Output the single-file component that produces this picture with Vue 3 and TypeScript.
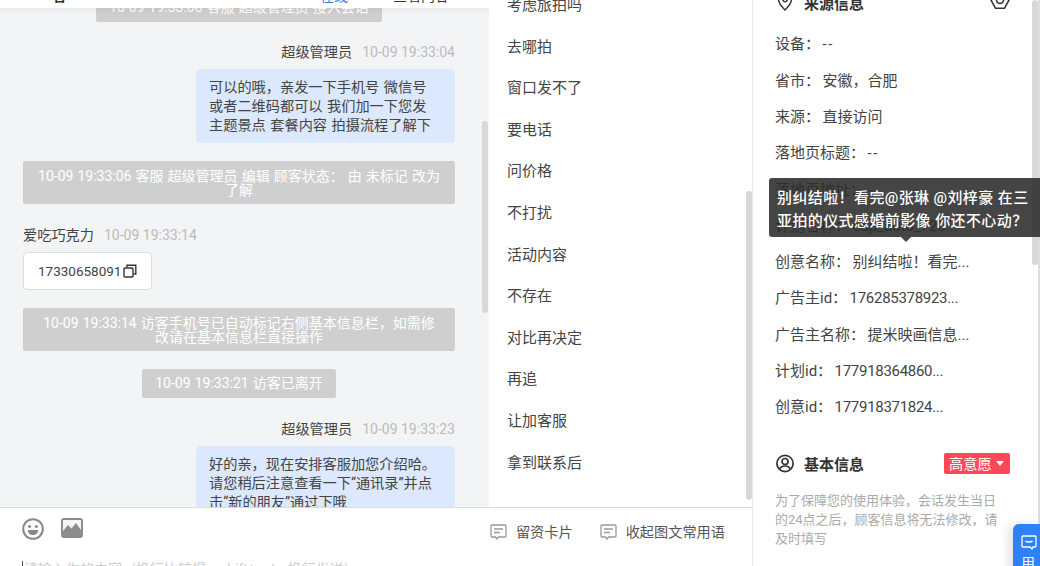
<script setup lang="ts">
interface InfoRow { label: string; value: string; kind?: 'dash' | 'num' }
const quickReplies: string[] = ['考虑旅拍吗','去哪拍','窗口发不了','要电话','问价格','不打扰','活动内容','不存在','对比再决定','再追','让加客服','拿到联系后']
const sourceInfo: InfoRow[] = [
  { label: '设备：', value: '--', kind: 'dash' },
  { label: '省市：', value: '安徽，合肥' },
  { label: '来源：', value: '直接访问' },
  { label: '落地页标题：', value: '--', kind: 'dash' },
  { label: '落地页地址：', value: '--', kind: 'dash' },
  { label: '计划名称：', value: 'cdp_auto_720...' },
  { label: '创意名称：', value: '别纠结啦！看完...' },
  { label: '广告主id：', value: '176285378923...', kind: 'num' },
  { label: '广告主名称：', value: '提米映画信息...' },
  { label: '计划id：', value: '177918364860...', kind: 'num' },
  { label: '创意id：', value: '177918371824...', kind: 'num' },
]
</script>

<template>
  <div class="page">
    <div class="main">
      <div class="top">
        <section class="chat">
          <header class="chat-head">
            <span class="h-name">名</span>
            <span class="h-link">在线</span>
            <span class="h-more">查看内容</span>
          </header>
          <div class="log">
            <div class="notice inline">10-09 19:33:00 客服 超级管理员 接入会话</div>
            <div class="who right first"><span>超级管理员</span><em>10-09 19:33:04</em></div>
            <div class="bubble">可以的哦，亲发一下手机号 微信号<br>或者二维码都可以 我们加一下您发<br>主题景点 套餐内容 拍摄流程了解下</div>
            <div class="notice">10-09 19:33:06 客服 超级管理员 编辑 顾客状态： 由 未标记 改为<br>了解</div>
            <div class="who"><span>爱吃巧克力</span><em>10-09 19:33:14</em></div>
            <div class="phone">
              17330658091
              <svg width="14" height="14" viewBox="0 0 14 14" fill="none" stroke="#333" stroke-width="1.4"><rect x="1" y="4" width="9" height="9" rx="1"/><path d="M4 3.500V1.200h8.800V10H10.500"/></svg>
            </div>
            <div class="notice">10-09 19:33:14 访客手机号已自动标记右侧基本信息栏，如需修<br>改请在基本信息栏直接操作</div>
            <div class="notice inline">10-09 19:33:21 访客已离开</div>
            <div class="who right"><span>超级管理员</span><em>10-09 19:33:23</em></div>
            <div class="bubble">好的亲，现在安排客服加您介绍哈。<br>请您稍后注意查看一下“通讯录”并点<br>击“新的朋友”通过下哦</div>
          </div>
          <i class="thumb chat-thumb"></i>
        </section>
        <section class="quick">
          <div v-for="q in quickReplies" :key="q" class="quick-item">{{ q }}</div>
          <i class="thumb quick-thumb"></i>
        </section>
      </div>
      <footer class="composer">
        <div class="tools">
          <div class="tool-left">
            <svg width="22" height="22" viewBox="0 0 22 22"><circle cx="11" cy="11" r="9.800" fill="none" stroke="#888" stroke-width="2"/><circle cx="7.600" cy="8.400" r="1.500" fill="#888"/><circle cx="14.400" cy="8.400" r="1.500" fill="#888"/><path d="M5.800 12h10.400c0 3-2.300 5-5.200 5s-5.200-2-5.200-5z" fill="#888"/></svg>
            <svg width="22" height="20" viewBox="0 0 22 20"><rect width="22" height="20" rx="3" fill="#8c8c8c"/><rect x="2" y="2" width="18" height="14" fill="#f5f5f5"/><path d="M2 16v-3l5-6 3.500 3.500L15 5l5 7v4z" fill="#8c8c8c"/></svg>
          </div>
          <div class="tool-right">
            <span class="tool-btn">
              <svg width="17" height="16" viewBox="0 0 17 16" fill="none" stroke="#999" stroke-width="1.300"><path d="M2 1h13a1 1 0 0 1 1 1v10a1 1 0 0 1-1 1H8.500L7 15l-1.500-2H2a1 1 0 0 1-1-1V2a1 1 0 0 1 1-1z"/><path d="M4 5h9M4 8.500h6"/></svg>
              留资卡片
            </span>
            <span class="tool-btn">
              <svg width="17" height="16" viewBox="0 0 17 16" fill="none" stroke="#999" stroke-width="1.300"><path d="M2 1h13a1 1 0 0 1 1 1v10a1 1 0 0 1-1 1H8.500L7 15l-1.500-2H2a1 1 0 0 1-1-1V2a1 1 0 0 1 1-1z"/><path d="M4 5h9M4 8.500h6"/></svg>
              收起图文常用语
            </span>
          </div>
        </div>
        <div class="input"><i class="caret"></i>请输入你的内容（换行比较慢，shift+enter换行发送）</div>
      </footer>
    </div>

    <aside class="side">
      <div class="sec-head first-head">
        <div class="sec-title">
          <svg width="16" height="18" viewBox="0 0 16 18" fill="none" stroke="#333" stroke-width="1.500"><path d="M8 17C4 13 1.500 10 1.500 6.500a6.500 6.500 0 0 1 13 0C14.500 10 12 13 8 17z"/><circle cx="8" cy="6.500" r="2.200"/></svg>
          <strong>来源信息</strong>
        </div>
        <svg class="hex" width="20" height="20" viewBox="0 0 20 20" fill="none" stroke="#333" stroke-width="1.600"><path d="M5.500 18.300h9l4.500-8.300-4.500-8.300h-9L1 10z"/><circle cx="10" cy="10" r="3.500"/></svg>
      </div>
      <div v-for="s in sourceInfo" :key="s.label" class="info-row"><span class="label">{{ s.label }}</span><span :class="s.kind">{{ s.value }}</span></div>

      <div class="sec-head base-head">
        <div class="sec-title base-title">
          <svg width="18" height="19" viewBox="0 0 18 19" fill="none" stroke="#333" stroke-width="1.700"><circle cx="9" cy="9.500" r="8.100"/><circle cx="9" cy="7.500" r="3"/><path d="M3.500 15.500c.8-2.400 3-3.500 5.500-3.500s4.700 1.100 5.500 3.500"/></svg>
          <strong>基本信息</strong>
        </div>
        <span class="tag">高意愿<i class="tri"></i></span>
      </div>
      <p class="hint">为了保障您的使用体验，会话发生当日<br>的24点之后，顾客信息将无法修改，请<br>及时填写</p>

      <i class="thumb side-thumb"></i>
      <i class="edge"></i>

      <div class="tip">
        别纠结啦！看完@张琳 @刘梓豪 在三<br>亚拍的仪式感婚前影像 你还不心动？
        <i class="tip-arrow"></i>
      </div>

      <div class="fab">
        <svg width="16" height="15" viewBox="0 0 16 15" fill="none" stroke="#fff" stroke-width="1.300"><path d="M2 1h12a1 1 0 0 1 1 1v9a1 1 0 0 1-1 1h-2l-1 2-2-2H2a1 1 0 0 1-1-1V2a1 1 0 0 1 1-1z"/><path d="M4.500 6c1 1.300 6 1.300 7 0"/></svg>
        <span>用</span>
      </div>
    </aside>
  </div>
</template>

<style>
html, body { margin: 0; background: #fff; }
</style>

<style scoped>
.page {
  display: flex;
  width: 1040px;
  height: 566px;
  overflow: hidden;
  font-family: Roboto, "Noto Sans CJK SC", sans-serif;
  font-size: 14.2px;
  color: #444;
  background: #fff;
}
.main { width: 752px; flex: none; display: flex; flex-direction: column; }
.top { flex: 1; min-height: 0; display: flex; }

.chat {
  position: relative;
  width: 489px;
  flex: none;
  background: #f3f4f6;
  overflow: hidden;
}
.chat-head {
  position: absolute;
  inset: 0 0 auto 0;
  height: 8px;
  overflow: hidden;
  background: #fff;
  box-shadow: 0 2px 6px rgba(0, 0, 0, .06);
  z-index: 2;
  line-height: 14px;
}
.chat-head span { position: absolute; top: -11px; font-size: 14px; }
.h-name { left: 52px; font-weight: 700; color: #333; }
.h-link { left: 320px; color: #3a7be0; }
.h-more { left: 393px; color: #333; }

.log {
  display: flex;
  flex-direction: column;
  align-items: flex-start;
  padding: 0 34px 0 23px;
  margin-top: -7px;
}
.who { height: 20px; line-height: 20px; margin-top: 3px; margin-bottom: 7px; white-space: nowrap; }
.who.first { margin-top: 2px; }
.who.right { align-self: flex-end; }
.who em { font-style: normal; font-size: 14px; color: #bbb; margin-left: 10px; }
.bubble {
  align-self: flex-end;
  width: 259px;
  box-sizing: border-box;
  padding: 9px 13px 8px;
  background: #dce8fd;
  border-radius: 5px;
  line-height: 19px;
  word-spacing: 1px;
  color: #444;
  margin-bottom: 18px;
  white-space: nowrap;
}
.notice {
  align-self: stretch;
  background: #cfcfcf;
  color: #fff;
  padding: 8px 14px 7px;
  text-align: center;
  font-size: 14px;
  line-height: 14px;
  word-spacing: .6px;
  border-radius: 2px;
  margin-bottom: 18px;
  white-space: nowrap;
}
.notice.inline {
  align-self: center;
  padding: 0 13px;
  line-height: 29px;
}
.phone {
  display: flex;
  align-items: center;
  gap: 2px;
  box-sizing: border-box;
  height: 38px;
  width: 129px;
  padding-left: 14px;
  font-size: 13.500px;
  background: #fff;
  border: 1px solid #ddd;
  border-radius: 4px;
  margin-bottom: 18px;
}

.thumb { position: absolute; display: block; width: 6px; background: #d8d8d8; border-radius: 3px; }
.chat-thumb { left: 482px; top: 121px; height: 192px; }
.quick { position: relative; flex: 1; overflow: hidden; padding-left: 18px; background: #fff; }
.quick-item { height: 41.600px; line-height: 41.600px; font-size: 15px; position: relative; top: -15px; }
.quick-thumb { right: 0; top: 191px; height: 309px; }

.composer {
  height: 59px;
  flex: none;
  box-sizing: border-box;
  border-top: 1px solid #ddd;
  overflow: hidden;
  background: #fff;
}
.tools {
  display: flex;
  justify-content: space-between;
  padding: 10px 27px 0 22px;
  height: 49px;
  box-sizing: border-box;
}
.tool-left { display: flex; gap: 17px; align-items: flex-start; }
.tool-right { display: flex; gap: 27px; padding-top: 4px; height: 20px; line-height: 20px; color: #555; }
.tool-btn { display: flex; align-items: center; gap: 9px; white-space: nowrap; }
.input {
  position: relative;
  padding-left: 24px;
  line-height: 14px;
  margin-top: 5px;
  font-size: 14px;
  color: #ccc;
  white-space: nowrap;
}
.caret { position: absolute; left: 22px; top: -1px; width: 1px; height: 16px; background: #555; }

.side {
  position: relative;
  flex: 1;
  border-left: 1px solid #e5e5e5;
  padding: 0 30px 0 22px;
  overflow: hidden;
  background: #fff;
  font-size: 15px;
}
.sec-head { display: flex; align-items: center; justify-content: space-between; }
.first-head { height: 26px; margin-top: -11px; margin-bottom: 11.400px; }
.sec-title { display: flex; align-items: center; gap: 11px; padding-left: 2px; }
.base-title { gap: 10px; padding-left: 1px; }
.sec-title strong { font-weight: 700; color: #333; }
.hex { margin-bottom: 4px; }
.info-row { height: 36.300px; line-height: 36.300px; white-space: nowrap; color: #444; }
.label { margin-right: 2.500px; }
.dash { letter-spacing: 1.500px; font-variant-ligatures: none; }
.num { letter-spacing: -.3px; }
.base-head { height: 22px; margin-top: 26.600px; }
.tag {
  display: flex;
  align-items: center;
  gap: 4px;
  box-sizing: border-box;
  width: 66px;
  height: 21px;
  padding-left: 5px;
  background: #ff4757;
  border-radius: 2px;
  color: #fff;
  font-size: 14.200px;
}
.tri { width: 0; height: 0; border: 4px solid transparent; border-top: 5px solid #fff; border-bottom: 0; }
.hint {
  margin: 17px 0 0;
  font-size: 13px;
  line-height: 19px;
  color: #aaa;
  white-space: nowrap;
}
.side-thumb { right: 2px; top: 0; height: 265px; }
.edge { position: absolute; right: 0; top: 0; bottom: 0; width: 2px; background: #ddd; }

.tip {
  position: absolute;
  left: 16px;
  top: 178px;
  width: 280px;
  height: 59px;
  box-sizing: border-box;
  padding: 9px 8px;
  background: rgba(43, 43, 43, .88);
  border-radius: 3px;
  color: #fff;
  font-weight: 500;
  letter-spacing: .4px;
  line-height: 23px;
  white-space: nowrap;
}
.tip-arrow {
  position: absolute;
  left: 132px;
  bottom: -5px;
  width: 0;
  height: 0;
  border: 5px solid transparent;
  border-top-color: rgba(43, 43, 43, .88);
  border-bottom: 0;
}
.fab {
  position: absolute;
  right: 0;
  top: 524px;
  width: 27px;
  height: 60px;
  box-sizing: border-box;
  padding: 11px 0 0 8px;
  background: #2d82fa;
  border-radius: 6px 0 0 0;
  box-shadow: -4px 0 12px rgba(0, 0, 0, .12);
  color: #fff;
  font-size: 14px;
  line-height: 14px;
}
.fab svg { display: block; margin-bottom: 6px; }
</style>
